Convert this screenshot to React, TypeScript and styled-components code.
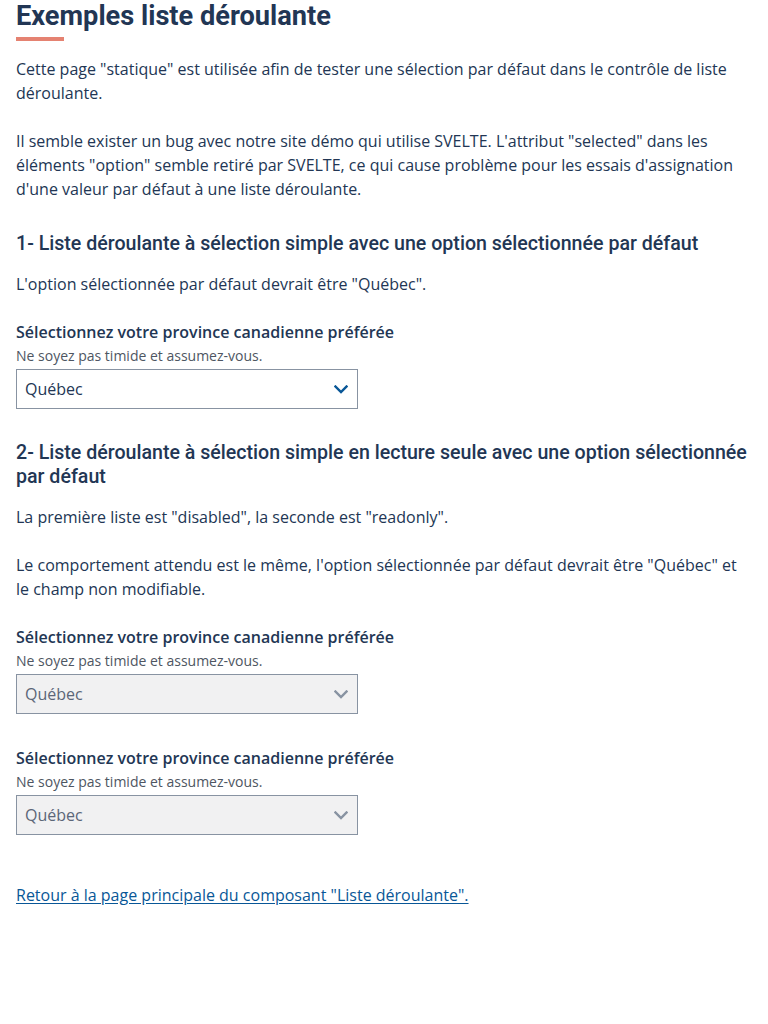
import React from "react";
import styled, { createGlobalStyle } from "styled-components";

const Global = createGlobalStyle`
  html, body { margin: 0; padding: 0; background: #ffffff; }
  body {
    font-family: "Open Sans", "Liberation Sans", sans-serif;
    font-size: 16px;
    line-height: 24px;
    color: #223654;
  }
  * { box-sizing: border-box; }
`;

const Page = styled.main`
  padding: 0 16px;
  max-width: 768px;
`;

const Title = styled.h1`
  margin: 0;
  font-family: Roboto, "Liberation Sans", sans-serif;
  font-weight: 700;
  font-size: 27.2px;
  line-height: 32px;
  color: #223654;
`;

const Accent = styled.div`
  width: 48px;
  height: 4px;
  margin: 5px 0 16px;
  background: #e58271;
`;

const Para = styled.p`
  margin: 0 0 24px;
`;

const SectionTitle = styled.h2`
  margin: 31px 0 16px;
  font-family: Roboto, "Liberation Sans", sans-serif;
  font-weight: 500;
  font-size: 19.6px;
  line-height: 24px;
  color: #223654;
`;

const FormGroup = styled.div`
  display: flex;
  flex-direction: column;
  margin-bottom: 32px;
`;

const Label = styled.label`
  font-weight: 600;
  font-size: 16px;
  line-height: 24px;
  color: #223654;
`;

const Hint = styled.span`
  font-size: 14px;
  line-height: 20px;
  margin: 2px 0 3px;
  color: #4e5662;
`;

const SelectWrap = styled.div`
  position: relative;
  width: 342px;
  height: 40px;
`;

const NativeSelect = styled.select<{ $disabled?: boolean }>`
  appearance: none;
  -webkit-appearance: none;
  width: 100%;
  height: 40px;
  margin: 0;
  padding: 0 36px 0 8px;
  border: 1px solid #8893a2;
  border-radius: 0;
  font-family: "Open Sans", "Liberation Sans", sans-serif;
  font-size: 16px;
  line-height: 24px;
  background: ${(p) => (p.$disabled ? "#f1f1f2" : "#ffffff")};
  color: ${(p) => (p.$disabled ? "#5b6678" : "#223654")};
  opacity: 1;
  outline: none;
`;

const Chevron = styled.svg<{ $disabled?: boolean }>`
  position: absolute;
  right: 10px;
  top: 16px;
  width: 14px;
  height: 9px;
  pointer-events: none;
  color: ${(p) => (p.$disabled ? "#8893a2" : "#095797")};
`;

const LinkPara = styled.p`
  margin: 48px 0 0;
`;

const Link = styled.a`
  color: #095797;
  text-decoration: underline;
  text-underline-offset: 2px;
`;

function Dropdown({ disabled, id }: { disabled?: boolean; id: string }) {
  return (
    <FormGroup>
      <Label htmlFor={id}>Sélectionnez votre province canadienne préférée</Label>
      <Hint>Ne soyez pas timide et assumez-vous.</Hint>
      <SelectWrap>
        <NativeSelect id={id} $disabled={disabled} disabled={disabled} defaultValue="qc">
          <option value="on">Ontario</option>
          <option value="qc">Québec</option>
          <option value="bc">Colombie-Britannique</option>
        </NativeSelect>
        <Chevron $disabled={disabled} viewBox="0 0 14 9" aria-hidden="true">
          <polyline
            points="1.5,1.5 7,7 12.5,1.5"
            fill="none"
            stroke="currentColor"
            strokeWidth="2.4"
            strokeLinecap="square"
          />
        </Chevron>
      </SelectWrap>
    </FormGroup>
  );
}

export default function App() {
  return (
    <>
      <Global />
      <Page>
        <Title>Exemples liste déroulante</Title>
        <Accent />
        <Para>
          Cette page "statique" est utilisée afin de tester une sélection par défaut dans le contrôle de liste
          déroulante.
        </Para>
        <Para>
          Il semble exister un bug avec notre site démo qui utilise SVELTE. L'attribut "selected" dans les
          éléments "option" semble retiré par SVELTE, ce qui cause problème pour les essais d'assignation
          d'une valeur par défaut à une liste déroulante.
        </Para>

        <SectionTitle>1- Liste déroulante à sélection simple avec une option sélectionnée par défaut</SectionTitle>
        <Para>L'option sélectionnée par défaut devrait être "Québec".</Para>
        <Dropdown id="s1" />

        <SectionTitle>
          2- Liste déroulante à sélection simple en lecture seule avec une option sélectionnée par défaut
        </SectionTitle>
        <Para>La première liste est "disabled", la seconde est "readonly".</Para>
        <Para>
          Le comportement attendu est le même, l'option sélectionnée par défaut devrait être "Québec" et le
          champ non modifiable.
        </Para>
        <Dropdown id="s2" disabled />
        <Dropdown id="s3" disabled />

        <LinkPara>
          <Link href="#">Retour à la page principale du composant "Liste déroulante".</Link>
        </LinkPara>
      </Page>
    </>
  );
}
